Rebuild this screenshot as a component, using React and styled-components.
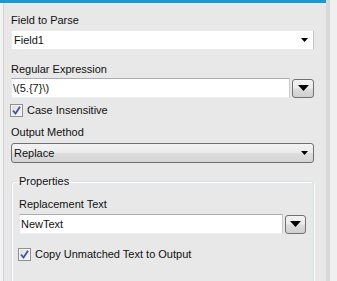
import React from "react";
import styled, { createGlobalStyle } from "styled-components";

const GlobalStyle = createGlobalStyle`
  html, body {
    margin: 0;
    padding: 0;
    background: #f0f0f0;
  }
  body {
    font-family: "Liberation Sans", Arial, sans-serif;
    font-size: 11px;
    color: #111;
  }
`;

const Frame = styled.div`
  display: flex;
  width: 337px;
  height: 281px;
  overflow: hidden;
`;

const Panel = styled.div`
  width: 326px;
  flex: none;
  box-sizing: border-box;
  background: #e8e8e8;
  border-top: 3px solid #1e98cd;
  box-shadow: inset 3px 0 #f2f2f2, inset 4px 0 #d2d2d2;
  padding: 11px 12px 0 11px;
  overflow: hidden;
`;

const Gutter = styled.div`
  width: 4px;
  flex: none;
  background: #d9d9d9;
`;

const Edge = styled.div`
  flex: 1;
  background: #f0f0f0;
`;

const Label = styled.div`
  line-height: 13px;
  margin-top: ${(p) => p.$top || 0}px;
  margin-bottom: ${(p) => p.$bottom ?? 3}px;
  white-space: nowrap;
`;

const Combo = styled.div`
  height: 20px;
  box-sizing: border-box;
  display: flex;
  align-items: center;
  justify-content: space-between;
  padding: 0 5px 0 2px;
  background: ${(p) =>
    p.$button
      ? "linear-gradient(#f3f3f3 0%, #ebebeb 48%, #dddddd 52%, #d4d4d4 100%)"
      : "#fff"};
  border: 1px solid ${(p) => (p.$button ? "#707070" : "#ececec")};
  border-right-color: ${(p) => (p.$button ? "#707070" : "#c4c4c4")};
  border-radius: ${(p) => (p.$button ? "3px" : "0")};
  line-height: 13px;
`;

const Row = styled.div`
  display: flex;
  align-items: center;
  gap: 2px;
`;

const TextBox = styled.div`
  flex: 1;
  height: 20px;
  box-sizing: border-box;
  display: flex;
  align-items: center;
  padding: 0 ${(p) => p.$pad ?? 1}px;
  background: #fff;
  border: 1px solid;
  border-color: #abadb3 #c9c9c9 #eef1f4 #e6e8ec;
  line-height: 13px;
  white-space: nowrap;
`;

const DropButton = styled.div`
  width: ${(p) => p.$w || 22}px;
  height: 19px;
  box-sizing: border-box;
  flex: none;
  display: flex;
  align-items: center;
  justify-content: center;
  border: 1px solid #707070;
  border-radius: 3px;
  background: linear-gradient(#f3f3f3 0%, #ebebeb 48%, #dddddd 52%, #cfcfcf 100%);
`;

const Check = styled.label`
  display: flex;
  align-items: center;
  gap: 4px;
  line-height: 13px;
  margin-top: ${(p) => p.$top || 0}px;
  margin-left: -1px;
  white-space: nowrap;
`;

const Box = styled.span`
  width: 13px;
  height: 13px;
  box-sizing: border-box;
  flex: none;
  border: 1px solid #8e8f8f;
  background: linear-gradient(135deg, #dcdcdc, #f6f6f6);
  box-shadow: inset 0 0 0 1px #f4f4f4;
  display: flex;
  align-items: center;
  justify-content: center;
`;

const Group = styled.fieldset`
  margin: 12px 0 0 0;
  padding: 10px 7px 40px 7px;
  border: 1px solid #d5dfe5;
  border-radius: 3px;
  box-shadow: 1px 1px 0 #fff, inset 1px 1px 0 #fff;
  min-width: 0;
`;

const Legend = styled.legend`
  padding: 0 2px;
  margin-left: -2px;
  line-height: 13px;
`;

const SmallArrow = () => (
  <svg width="7" height="4" viewBox="0 0 7 4">
    <path d="M0 0h7L3.5 4z" fill="#000" />
  </svg>
);

const BigArrow = () => (
  <svg width="11" height="6" viewBox="0 0 11 6">
    <path d="M0 0h11L5.5 6z" fill="#000" />
  </svg>
);

const Tick = () => (
  <svg width="9" height="9" viewBox="0 0 9 9">
    <path
      d="M1 4.5 L3.5 7.5 L8 0.8"
      fill="none"
      stroke="#41569c"
      strokeWidth="1.8"
    />
  </svg>
);

export default function App() {
  return (
    <>
      <GlobalStyle />
      <Frame>
        <Panel>
          <Label>Field to Parse</Label>
          <Combo>
            <span>Field1</span>
            <SmallArrow />
          </Combo>

          <Label $top={13} $bottom={2}>Regular Expression</Label>
          <Row>
            <TextBox $pad={1}>\(5.{"{7}"}\)</TextBox>
            <DropButton>
              <BigArrow />
            </DropButton>
          </Row>

          <Check $top={6}>
            <Box>
              <Tick />
            </Box>
            Case Insensitive
          </Check>

          <Label $top={9} $bottom={4}>Output Method</Label>
          <Combo $button>
            <span>Replace</span>
            <SmallArrow />
          </Combo>

          <Group>
            <Legend>Properties</Legend>
            <Label>Replacement Text</Label>
            <Row>
              <TextBox $pad={1}>NewText</TextBox>
              <DropButton $w={21}>
                <BigArrow />
              </DropButton>
            </Row>
            <Check $top={14}>
              <Box>
                <Tick />
              </Box>
              Copy Unmatched Text to Output
            </Check>
          </Group>
        </Panel>
        <Gutter />
        <Edge />
      </Frame>
    </>
  );
}
